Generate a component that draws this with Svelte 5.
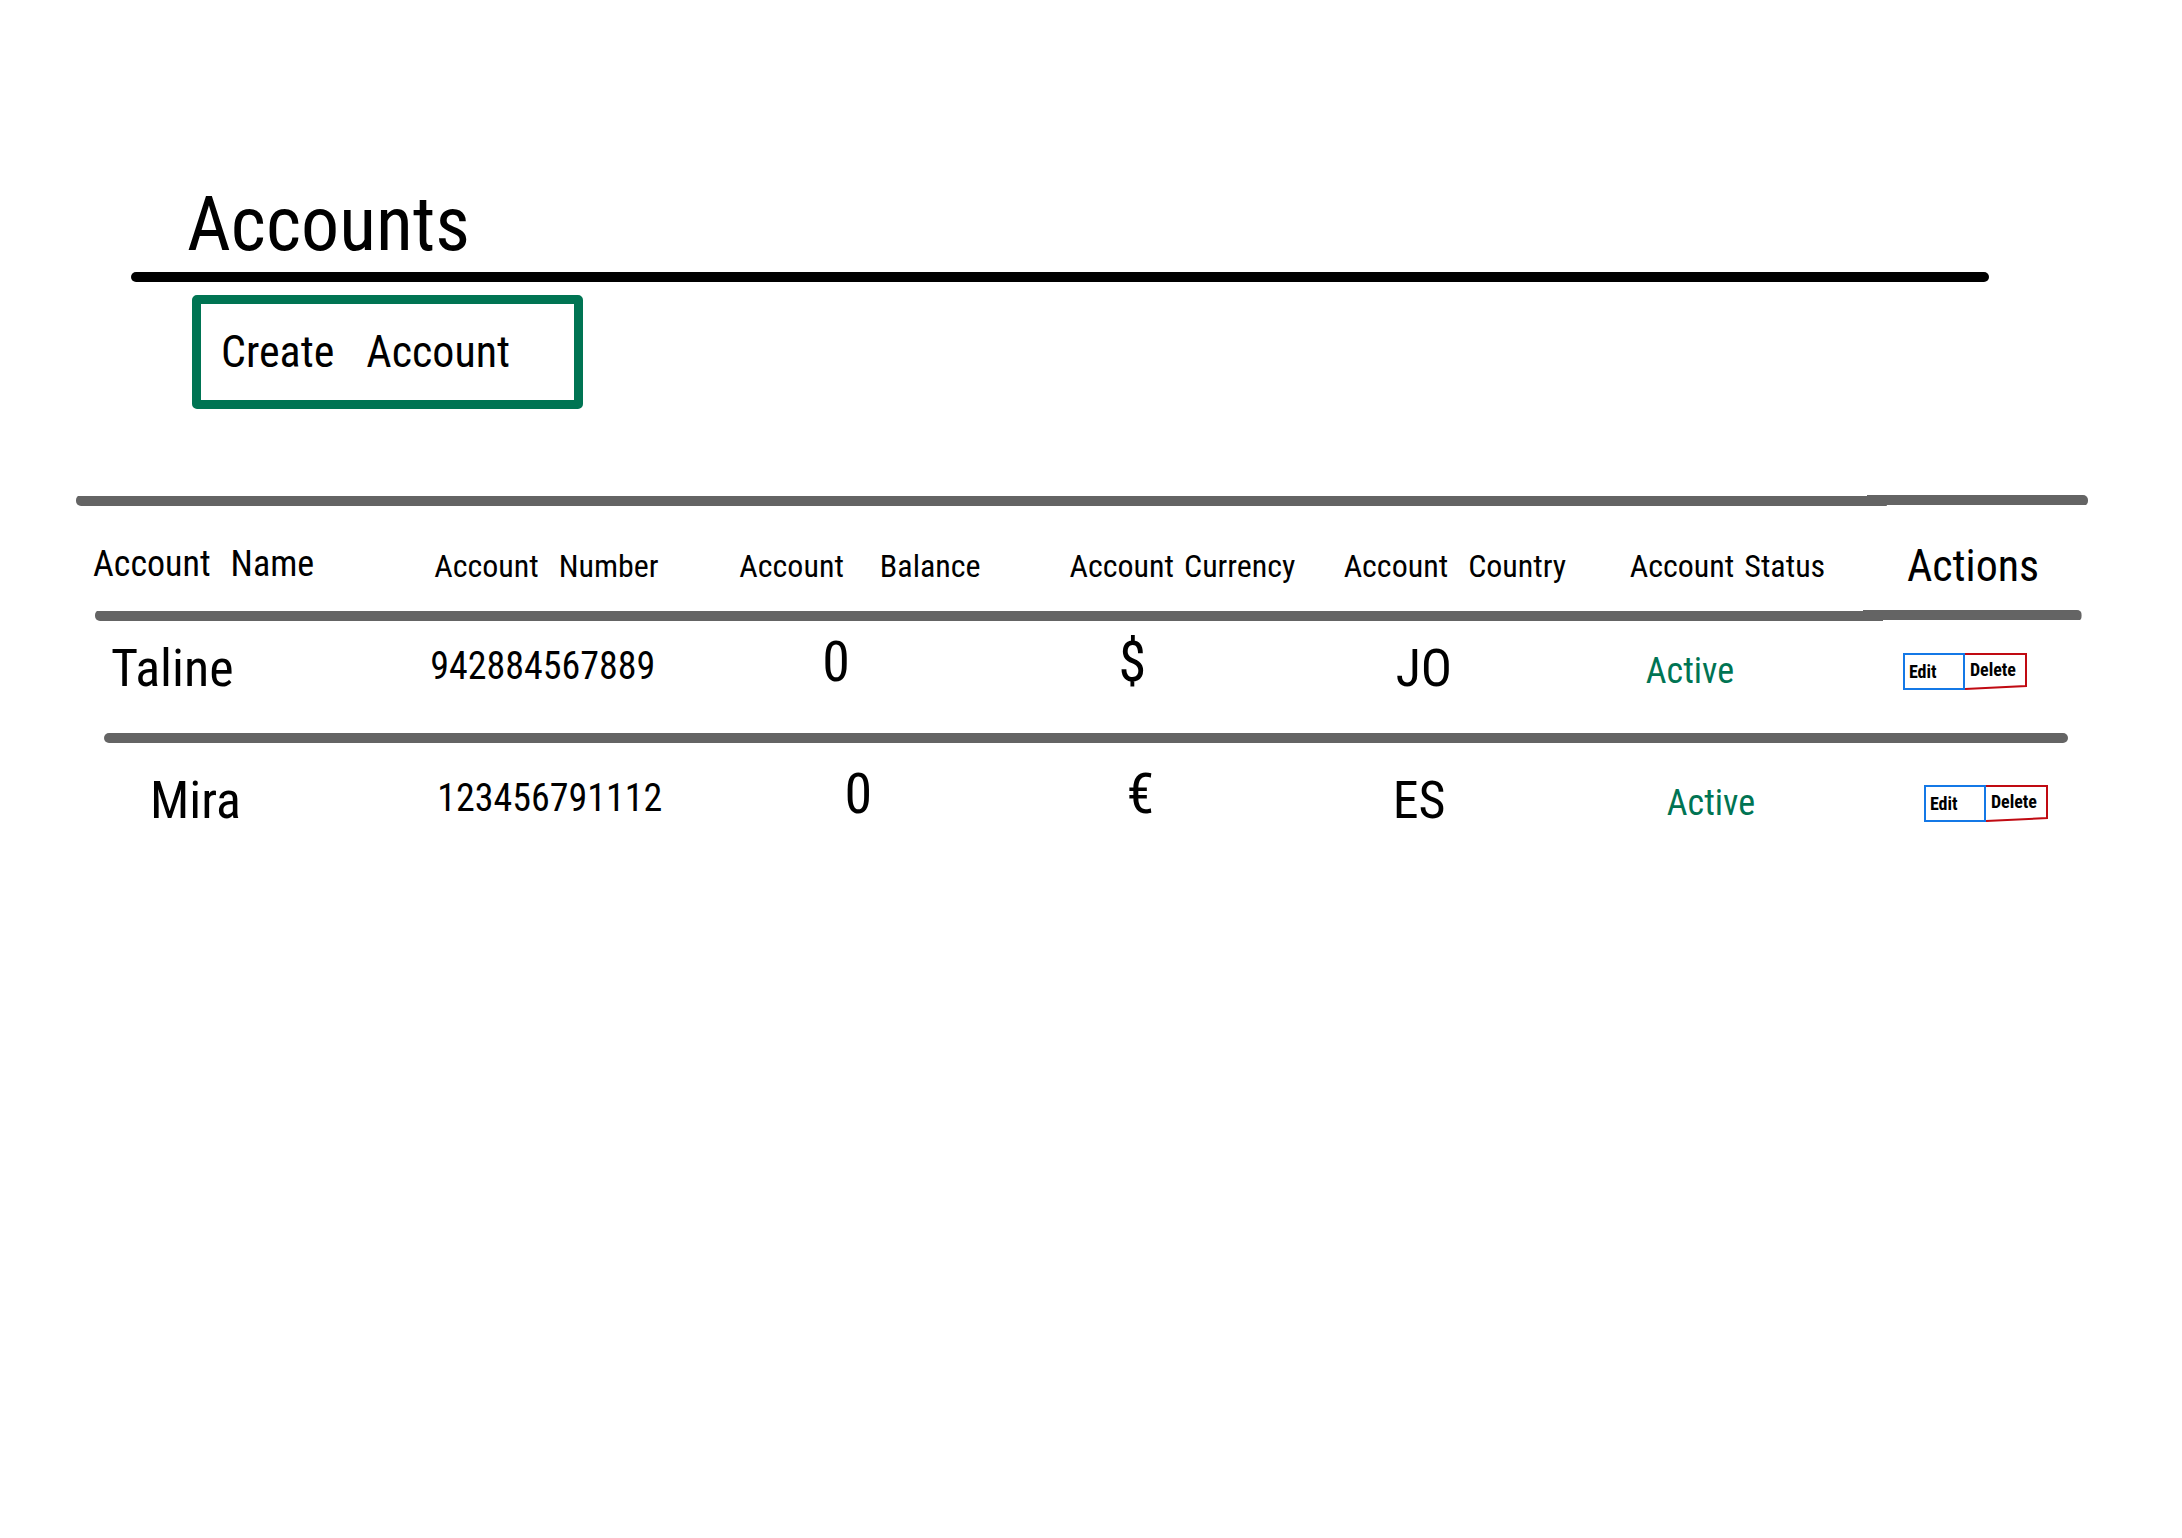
<script>
  const columns = [
    { words: ['Account', 'Name'], style: 'first' },
    { words: ['Account', 'Number'], style: 'medium' },
    { words: ['Account', 'Balance'], style: 'wide' },
    { words: ['Account', 'Currency'], style: 'narrow' },
    { words: ['Account', 'Country'], style: 'medium' },
    { words: ['Account', 'Status'], style: 'narrow' },
    { words: ['Actions'], style: 'large' }
  ];

  const accounts = [
    { name: 'Taline', number: '942884567889', balance: '0', currency: '$', country: 'JO', status: 'Active' },
    { name: 'Mira', number: '123456791112', balance: '0', currency: '€', country: 'ES', status: 'Active' }
  ];
</script>

<main>
  <header>
    <h1>Accounts</h1>
  </header>

  <button class="create" type="button"><span>Create</span> <span>Account</span></button>

  <table>
    <thead>
      <tr>
        {#each columns as column}
          <th scope="col" class={column.style}>
            {#each column.words as word}<span>{word}</span>{' '}{/each}
          </th>
        {/each}
      </tr>
    </thead>
    <tbody>
      {#each accounts as account}
        <tr>
          <td class="name">{account.name}</td>
          <td class="number">{account.number}</td>
          <td class="high">{account.balance}</td>
          <td class="high">{account.currency}</td>
          <td>{account.country}</td>
          <td class="status">{account.status}</td>
          <td class="actions">
            <button class="edit" type="button">Edit</button>
            <button class="delete" type="button">
              <svg viewBox="0 0 62 37" preserveAspectRatio="none" aria-hidden="true">
                <path d="M0 1H61V33L0 36" />
              </svg>
              <span>Delete</span>
            </button>
          </td>
        </tr>
      {/each}
    </tbody>
  </table>
</main>

<style>
  :global(body) {
    margin: 0;
    background: #fff;
  }

  main {
    padding: 172px 94px 80px 76px;
    color: #000;
    font-family: 'Roboto Condensed', 'Liberation Sans Narrow', 'DejaVu Sans Condensed', sans-serif;
  }

  header {
    margin: 0 99px 0 55px;
  }

  header::after {
    content: '';
    display: block;
    height: 10px;
    border-radius: 5px;
    background: #000;
  }

  h1 {
    margin: 0;
    padding: 4px 0 0 56px;
    font-size: 76px;
    font-weight: 400;
    line-height: 96px;
  }

  button {
    margin: 0;
    padding: 0;
    background: none;
    color: inherit;
    font: inherit;
    cursor: pointer;
  }

  .create {
    display: flex;
    align-items: center;
    gap: 32px;
    width: 391px;
    height: 114px;
    margin: 13px 0 0 116px;
    padding: 0 20px;
    border: 9px solid #007453;
    border-radius: 5px;
    font-size: 44px;
  }

  table,
  thead,
  tbody {
    display: block;
  }

  table {
    margin-top: 86px;
  }

  tr {
    display: grid;
    align-items: center;
  }

  tr::before {
    content: '';
    grid-column: 1 / -1;
    height: 10px;
    border-radius: 5px;
    background: #646464;
  }

  /* The upper rules are two overlapping strokes, the right one a pixel higher. */
  thead tr::before,
  tbody tr:first-child::before {
    height: 11px;
    background:
      linear-gradient(#646464 0 0) left bottom / 90% 10px no-repeat,
      linear-gradient(#646464 0 0) right top / 11% 10px no-repeat;
  }

  thead tr {
    grid-template-columns: 358fr 305fr 330fr 274fr 286fr 277fr 181fr;
    grid-template-rows: 11px 104px;
  }

  tbody tr {
    grid-template-columns: 335fr 392fr 296fr 277fr 250fr 257fr 179fr;
    grid-template-rows: 11px 94px;
    margin: 0 6px 0 19px;
    padding-bottom: 18px;
  }

  tbody tr:last-child {
    grid-template-columns: 333fr 407fr 282fr 266fr 274fr 257fr 144fr;
    grid-template-rows: 10px 114px;
    margin: 0 20px 0 28px;
  }

  th,
  td {
    padding: 0;
    font-weight: 400;
    text-align: left;
    white-space: nowrap;
  }

  th {
    display: flex;
    padding-top: 16px;
    font-size: 32px;
  }

  .first {
    gap: 20px;
    padding: 12px 0 0 17px;
    font-size: 36px;
  }

  .wide {
    gap: 36px;
  }

  .medium {
    gap: 20px;
  }

  .narrow {
    gap: 10px;
  }

  .large {
    font-size: 44px;
  }

  td {
    font-size: 52px;
  }

  .name {
    padding-left: 16px;
  }

  tr:last-child .name {
    padding-left: 46px;
  }

  .number {
    padding-bottom: 4px;
    font-size: 38px;
  }

  .high {
    padding-bottom: 12px;
    font-size: 56px;
  }

  .status {
    padding-top: 6px;
    color: #007453;
    font-size: 36px;
  }

  .actions {
    display: flex;
    padding-top: 6px;
    font-size: 18px;
    font-weight: 700;
  }

  .edit,
  .delete {
    width: 62px;
    height: 37px;
    text-align: left;
  }

  .edit {
    padding-left: 4px;
    border: 2px solid #1478e6;
  }

  .delete {
    display: grid;
    align-items: center;
    border: 0;
  }

  .delete svg,
  .delete span {
    grid-area: 1 / 1;
  }

  .delete span {
    padding: 0 0 4px 5px;
  }

  .delete svg {
    width: 100%;
    height: 37px;
    fill: none;
    stroke: #c00a12;
    stroke-width: 2;
  }
</style>
